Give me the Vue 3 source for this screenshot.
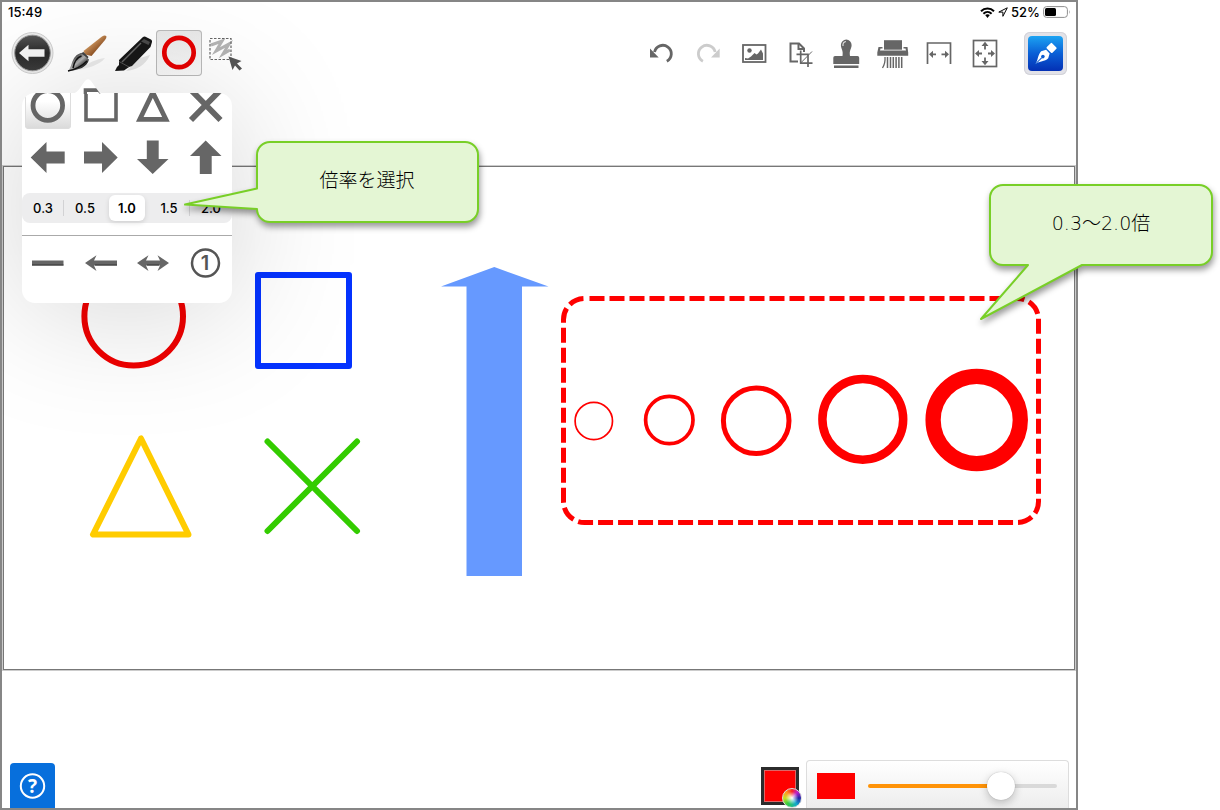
<template>
  <div class="stage">
    <div class="tablet">
      <div class="status">
        <span>15:49</span>
        <div class="status-right">
          <svg width="15" height="11" viewBox="0 0 15 11" fill="none" stroke="#000" stroke-width="2">
            <path d="M1 4.2C4.6 .6 10.400 .6 14 4.200" />
            <path d="M3.400 6.700c2.400-2.200 5.800-2.200 8.200 0" />
            <path d="M5.200 8 7.500 11 9.800 8C8.500 7 6.500 7 5.200 8z" fill="#000" stroke="none" />
          </svg>
          <svg width="10" height="10" viewBox="0 0 10 10" fill="none" stroke="#000" stroke-width="1" stroke-linejoin="round">
            <path d="M9.300 .8.8 5.100h4.100v4.200z" />
          </svg>
          <span>52%</span>
          <svg width="28" height="12" viewBox="0 0 28 12">
            <rect x=".6" y=".6" width="23.800" height="10.800" rx="3" fill="none" stroke="#8e8e8e" />
            <rect x="2" y="2" width="11" height="8" rx="1.500" />
            <path d="M26 4q1.500 2 0 4z" fill="#999" />
          </svg>
        </div>
      </div>

      <header class="toolbar">
        <button class="tool tool-back" aria-label="戻る">
          <svg viewBox="0 0 46 46">
            <defs>
              <linearGradient id="gBack" x2="0" y2="1">
                <stop offset="0" stop-color="#555" />
                <stop offset=".5" stop-color="#2a2a2a" />
                <stop offset="1" stop-color="#3c3c3c" />
              </linearGradient>
            </defs>
            <circle cx="23.500" cy="23" r="20.500" fill="#ececec" stroke="#cfcfcf" />
            <circle cx="23.500" cy="23" r="17.800" fill="url(#gBack)" stroke="#999" />
            <path d="M10 23 19.500 14.800v4.500H35.500v7.400H19.500v4.500z" fill="#f4f4f4" />
          </svg>
        </button>
        <button class="tool" aria-label="筆">
          <svg viewBox="0 0 46 46">
            <defs>
              <linearGradient id="gWood" x2="1" y2="1">
                <stop offset=".3" stop-color="#d9a066" />
                <stop offset=".7" stop-color="#8a4d20" />
              </linearGradient>
              <linearGradient id="gHair" x2="1" y2="1">
                <stop offset=".2" stop-color="#333" />
                <stop offset=".5" stop-color="#b5b5b5" />
                <stop offset=".75" stop-color="#222" />
              </linearGradient>
            </defs>
            <path d="M14 40C24 38 36 35 41 28 32 29 24 33 14 40z" fill="#000" opacity=".08" />
            <path d="M38 6.500Q41 4.500 42.500 6.500 42.500 8 41 10L27.500 26 21 24.500 19.500 21z" fill="url(#gWood)" />
            <path d="M19.500 22 24.500 27 22 31 14.500 24.500z" fill="#444" />
            <path d="M17 23 25 29.500C23 37 15 40.500 4 41 9 36 7 26 17 23z" fill="url(#gHair)" />
            <path d="M9 38Q11 28 17.500 26M4 41Q15 39 23 31" fill="none" stroke="#111" stroke-width="1.500" />
          </svg>
        </button>
        <button class="tool" aria-label="マーカー">
          <svg viewBox="0 0 46 46">
            <path d="M16 41C26 40 36 35 40 25L30 28z" fill="#000" opacity=".1" />
            <path d="M33 7Q34 6.300 35.500 6.700L41 9.500Q42.500 10.500 42 12L40.500 17 22 36 19 37 14 40.500 5 41 7 37 9 35 9 30z" fill="#171717" />
            <path d="M34 9 40 12 38.500 15 31 11.500z" fill="#4a4a4a" />
            <path d="M31 13 12 32" stroke="#666" stroke-width="1.500" />
            <path d="M9 31.500 19 37" stroke="#555" />
          </svg>
        </button>
        <button class="tool tool-active" aria-label="図形">
          <svg viewBox="0 0 46 46">
            <circle cx="23" cy="22.500" r="14.700" fill="none" stroke="#e60000" stroke-width="4.700" />
          </svg>
        </button>
        <button class="tool" aria-label="選択">
          <svg viewBox="0 0 46 46">
            <path d="M9 15 20 11 14 21 27 14 21 24 28 20" fill="none" stroke="#b4b4b4" stroke-width="3" />
            <rect x="8" y="8.500" width="21" height="21" fill="none" stroke="#666" stroke-width="1.200" stroke-dasharray="2.500 1.500" />
            <path d="M26.500 26.500 39.500 31 35 33.500 40 38.500 37.500 40.500 33 35.500 30.500 40z" fill="#555" />
          </svg>
        </button>

        <div class="spacer"></div>

        <button class="tool" aria-label="元に戻す">
          <svg viewBox="0 0 46 46">
            <path d="M16.500 22A8.500 8.500 0 1 1 28.800 31.300" fill="none" stroke="#666" stroke-width="2.800" />
            <path d="M12 18.500v9h8.700z" fill="#666" />
          </svg>
        </button>
        <button class="tool" aria-label="やり直す">
          <svg viewBox="0 0 46 46">
            <path d="M31.200 22A8.500 8.500 0 1 0 18.900 31.300" fill="none" stroke="#ccc" stroke-width="2.800" />
            <path d="M35.700 18.500v9h-8.700z" fill="#ccc" />
          </svg>
        </button>
        <button class="tool" aria-label="画像">
          <svg viewBox="0 0 46 46">
            <rect x="13" y="15" width="22.500" height="17" fill="none" stroke="#666" stroke-width="1.800" />
            <circle cx="19.500" cy="20.500" r="2.200" fill="#666" />
            <path d="M15 30v-2l3 .5 3-2 3.500-3.500 2 1.500 1.500-1 3-4 2 4v6.500z" fill="#666" />
          </svg>
        </button>
        <button class="tool" aria-label="ページ切り抜き">
          <svg viewBox="0 0 46 46" fill="none" stroke="#666" stroke-width="2">
            <path d="M22 31.500h-7.500V13.500h8.500l5 5V22" />
            <path d="M22.500 13.500V19H28" />
            <path d="M24.700 20.500v12.700H36.500M20.500 24.300h11.500V37" stroke-width="1.700" />
            <path d="M24.700 33 36 21.500" stroke-width="1" />
          </svg>
        </button>
        <button class="tool" aria-label="スタンプ">
          <svg viewBox="0 0 46 46" fill="#666">
            <path d="M24.300 9.500a5.500 5.500 0 0 1 5.300 5.500c0 4-2.600 5-1.600 11h7.500q1.700 0 1.700 1.700V34H11.300v-6.300q0-1.700 1.700-1.700h7.500c1-6-1.600-7-1.600-11a5.500 5.500 0 0 1 5.400-5.500z" />
            <rect x="12" y="35.500" width="24.500" height="2.500" />
            <path d="M21 16Q20.500 12 24 11.500" fill="none" stroke="#ddd" stroke-width="1.200" />
          </svg>
        </button>
        <button class="tool" aria-label="シュレッダー">
          <svg viewBox="0 0 46 46" fill="#666">
            <rect x="16" y="10.200" width="18" height="9.500" />
            <path d="M10.500 17h4v1.500h-2L12 20.500h26l-.5-2h-2V17h4l.7 5.500v3.200H9.300v-3.200z" />
            <path d="M19.500 27v11M22.500 27v11M25.300 27v11M28.100 27v11M30.900 27v11M33.700 27v11" stroke="#666" stroke-width="1.500" />
            <path d="M17 27Q17.500 33 14.500 38" fill="none" stroke="#666" stroke-width="1.300" />
          </svg>
        </button>
        <button class="tool" aria-label="幅に合わせる">
          <svg viewBox="0 0 46 46" fill="#666" stroke="#666">
            <path d="M13.500 34V13h23v21" fill="none" stroke-width="1.700" />
            <path d="M17 24.300h5M27.500 24.300h5" stroke-width="1.800" />
            <path d="M15 24.300 19 20.700v7.200zM35 24.300 31 20.700v7.200z" stroke="none" />
          </svg>
        </button>
        <button class="tool" aria-label="全体表示">
          <svg viewBox="0 0 46 46" fill="#666" stroke="#666">
            <rect x="13.500" y="10.500" width="23" height="26" fill="none" stroke-width="1.700" />
            <path d="M17 23.500h5M28 23.500h5M25 15v4.500M25 27.500V32" stroke-width="1.800" />
            <path d="M15 23.500 19 20v7zM35 23.500 31 20v7zM25 11.700 21.500 16h7zM25 35.300 21.500 31h7z" stroke="none" />
          </svg>
        </button>
        <button class="pen" aria-label="ペンモード">
          <svg viewBox="0 0 35 35">
            <g transform="translate(7.500 28) rotate(45)">
              <path d="M0 0C-1-5-5-8-5-13L-2.500-17.500H2.500L5-13C5-8 1-5 0 0z" fill="#fff" />
              <rect x="-4" y="-26.500" width="8" height="7.500" rx="1" fill="#fff" />
              <path d="M0 0V-9" stroke="#0b5bd0" />
              <circle cy="-10.500" r="1.800" fill="#0b5bd0" />
            </g>
          </svg>
        </button>
      </header>

      <main class="sheet">
        <svg class="drawing" viewBox="4 167 1070 502" fill="none" stroke-linejoin="round" stroke-linecap="round">
          <circle cx="133.700" cy="316.300" r="49.300" stroke="#f00000" stroke-width="6" />
          <rect x="258" y="275" width="91" height="91" stroke="#0433ff" stroke-width="6" />
          <path d="M141 438.500 93 534.500H188.500z" stroke="#fc0" stroke-width="6" />
          <path d="M267.500 441.500 357 531M357 441.500 267.500 531" stroke="#3c0" stroke-width="6" />
          <path d="M494.300 267 548.500 286.500H522V576H466.500V286.500H441z" fill="#69f" />
          <circle
            v-for="c in samples"
            :key="c.x"
            :cx="c.x"
            :cy="c.y"
            :r="c.r"
            stroke="red"
            :stroke-width="c.w"
          />
          <rect
            x="563.500" y="298.500" width="475" height="224" rx="21"
            stroke="red" stroke-width="5" stroke-linecap="butt"
            stroke-dasharray="15 5" stroke-dashoffset="-5"
          />
        </svg>
      </main>

      <footer class="footer">
        <button class="help" aria-label="ヘルプ">
          <svg viewBox="0 0 45 45">
            <circle cx="22.500" cy="23" r="11.700" fill="none" stroke="#fff" stroke-width="2" />
            <text x="22.500" y="30" text-anchor="middle" fill="#fff">?</text>
          </svg>
        </button>
        <div class="spacer"></div>
        <button class="color" aria-label="色">
          <span class="wheel"></span>
        </button>
        <div class="width-panel">
          <span class="swatch"></span>
          <input
            v-model="width"
            type="range"
            min="0"
            max="100"
            aria-label="太さ"
            :style="{ '--fill': width + '%' }"
          />
        </div>
      </footer>

      <section class="popover">
        <svg class="popover-arrow" width="32" height="15" viewBox="0 0 32 15">
          <path d="M0 15C7 14 11 3 14 1q2-1.500 4 0C21 3 25 14 32 15z" fill="#fff" />
          <path d="M11.700 15V9.300h12.500l4.300 5.700z" fill="#666" />
          <path d="M15 15v-2h11l2 2z" fill="#fff" />
        </svg>
        <div class="popover-body">
          <div class="shapes">
            <button
              v-for="s in shapes"
              :key="s.name"
              class="shape"
              :class="{ selected: s.name === shape }"
              :aria-label="s.name"
              @click="shape = s.name"
            >
              <svg viewBox="0 0 46 46">
                <path :d="s.d" :fill="s.w ? 'none' : '#666'" :stroke="s.w ? '#666' : 'none'" :stroke-width="s.w" />
              </svg>
            </button>
          </div>
          <div class="scales" role="radiogroup" aria-label="倍率">
            <label v-for="s in scales" :key="s" class="scale" :class="{ on: s === scale }">
              <input v-model="scale" type="radio" name="scale" :value="s" />
              <span>{{ s }}</span>
            </label>
          </div>
          <div class="lines">
            <button v-for="l in lines" :key="l.name" class="shape" :aria-label="l.name">
              <svg viewBox="0 0 46 46">
                <path :d="l.d" fill="#666" />
                <path :d="l.under" stroke="#333" />
              </svg>
            </button>
            <button class="shape" aria-label="番号">
              <svg viewBox="0 0 46 46">
                <circle cx="22.500" cy="23" r="13.500" fill="none" stroke="#555" stroke-width="2.500" />
                <text x="22" y="30" text-anchor="middle" fill="#555">1</text>
              </svg>
            </button>
          </div>
        </div>
      </section>
    </div>

    <div class="callout callout-left">
      <svg viewBox="0 0 224 82">
        <path d="M15 1H210a13 13 0 0 1 13 13V68a13 13 0 0 1-13 13H15A13 13 0 0 1 2 68L-70 63.500 2 47.500V14A13 13 0 0 1 15 1z" />
      </svg>
      <p>倍率を選択</p>
    </div>
    <div class="callout callout-right">
      <svg viewBox="0 0 224 82">
        <path d="M14 1H210a13 13 0 0 1 13 13V68a13 13 0 0 1-13 13H93L-8 135 39 81H14A13 13 0 0 1 1 68V14A13 13 0 0 1 14 1z" />
      </svg>
      <p>0.3〜2.0倍</p>
    </div>
  </div>
</template>

<script setup>
import { ref } from 'vue'

const shape = ref('円')
const scale = ref('1.0')
const width = ref(74)

const scales = ['0.3', '0.5', '1.0', '1.5', '2.0']

const shapes = [
  { name: '円', w: 4.8, d: 'M8 22.500a14.800 14.800 0 1 0 29.600 0a14.800 14.800 0 1 0-29.600 0z' },
  { name: '四角', w: 3.6, d: 'M8 7H38V37H8z' },
  { name: '三角', w: 4.8, d: 'M22.800 9.500 9.800 36.300H35.900z' },
  { name: 'バツ', w: 5.8, d: 'M8 7 37.500 37M37.500 7 8 37' },
  { name: '左矢印', d: 'M5.700 23.500 21.500 8v9.500H39.700v12H21.500V39z' },
  { name: '右矢印', d: 'M39.700 23.500 24 8v9.500H6v12H24V39z' },
  { name: '下矢印', d: 'M22.700 40 38.500 25H28.700V6.500H16.800V25H7z' },
  { name: '上矢印', d: 'M22.700 6.500 38.500 22H28.700V40H16.800V22H7z' }
]

const lines = [
  { name: '直線', d: 'M7 20.500H38.500V25.500H7z', under: 'M7 25H38.500' },
  { name: '矢印', d: 'M7 23 18.500 15.200 16 20.500H39v5H16L18.500 31z', under: 'M17 25H39' },
  { name: '両矢印', d: 'M7 23 18.500 15.200 16 20.500H30L27.500 15.200 39 23 27.500 31 30 25.500H16L18.500 31z', under: 'M17 25H29' }
]

const samples = [
  { x: 593.8, y: 421, r: 18.7, w: 1.7 },
  { x: 669.3, y: 420, r: 23.7, w: 3.7 },
  { x: 756.2, y: 420.7, r: 32.8, w: 5 },
  { x: 862.8, y: 419.3, r: 40.4, w: 8.5 },
  { x: 976.7, y: 420, r: 43.6, w: 15.3 }
]
</script>

<style>
body {
  margin: 0;
  background: #fff;
}
</style>

<style scoped>
.stage {
  position: relative;
  display: flex;
  min-height: 100vh;
  padding-right: 142px;
  box-sizing: border-box;
  overflow: hidden;
  font-family: Inter, "Noto Sans CJK JP", sans-serif;
}

button {
  padding: 0;
  border: 0;
  background: none;
  cursor: pointer;
}

button svg {
  display: block;
  width: 100%;
}

.spacer {
  flex: 1;
}

.tablet {
  position: relative;
  flex: 1;
  display: flex;
  flex-direction: column;
  border: 2px solid #868686;
  overflow: hidden;
}

/* status bar */
.status {
  display: flex;
  justify-content: space-between;
  align-items: center;
  height: 20px;
  padding: 0 5px 0 6px;
  font-size: 13px;
  font-weight: 500;
  color: #000;
}

.status-right {
  display: flex;
  align-items: center;
  gap: 3px;
}

/* toolbar */
.toolbar {
  display: flex;
  align-items: center;
  padding: 8px 9px 0 7px;
}

.tool {
  width: 46px;
  height: 46px;
  box-sizing: border-box;
}

.tool-back {
  margin-right: 9px;
}

.tool-active {
  border-radius: 4px;
  background: linear-gradient(#e8e8e8, #fafafa);
  box-shadow: inset 0 0 0 1px #bbb;
}

.pen {
  width: 43px;
  height: 43px;
  margin-left: 18px;
  padding: 4px;
  border-radius: 6px;
  background: #e2e2e8;
  box-shadow: inset 0 0 0 1px #d2d2d8;
}

.pen svg {
  border-radius: 4px;
  background: linear-gradient(#1ca3f2, #0a5fd6 50%, #0430b4);
}

/* page */
.sheet {
  margin: 90px 1px 0;
  border: 1px solid #777;
  box-shadow: 0 0 0 1px #ccc;
}

.drawing {
  display: block;
  width: 100%;
  height: auto;
}

/* footer */
.footer {
  display: flex;
  align-items: flex-end;
  height: 48px;
  margin-top: auto;
  padding: 0 7px 0 8px;
}

.help {
  width: 45px;
  height: 45px;
  border-radius: 4px 4px 0 0;
  background: #076fdc;
}

.help text {
  font: 700 19px "Open Sans", sans-serif;
}

.color {
  position: relative;
  width: 38px;
  height: 38px;
  margin: 0 7px 3px 0;
  border: 3px solid #2b2b2b;
  background: red;
  box-shadow: inset 0 0 0 1px #d66;
}

.wheel {
  position: absolute;
  right: -6px;
  bottom: -6px;
  width: 18px;
  height: 18px;
  border: 1px solid #ddd;
  border-radius: 50%;
  background:
    radial-gradient(#fff, transparent 50%),
    conic-gradient(#f22, #b2c 12%, #22a 25%, #1ac 40%, #3c4 60%, #cd2 75%, #f92 88%, #f22);
}

.width-panel {
  display: flex;
  align-items: center;
  gap: 13px;
  height: 48px;
  padding: 3px 11px 0 10px;
  box-sizing: border-box;
  border: 1px solid #ddd;
  border-bottom: 0;
  border-radius: 4px 4px 0 0;
  background: linear-gradient(#fff, #ededed);
}

.swatch {
  width: 38px;
  height: 26px;
  background: red;
}

.width-panel input {
  appearance: none;
  width: 189px;
  height: 28px;
  margin: 0;
  background: none;
}

.width-panel input::-webkit-slider-runnable-track {
  height: 4px;
  border-radius: 2px;
  background: linear-gradient(90deg, #ff9307 var(--fill), #d9d9d9 var(--fill));
}

.width-panel input::-webkit-slider-thumb {
  appearance: none;
  width: 28px;
  height: 28px;
  margin-top: -12px;
  border-radius: 50%;
  background: #fff;
  box-shadow: 0 3px 8px rgba(0, 0, 0, 0.22), 0 0 1px rgba(0, 0, 0, 0.3);
}

/* shape popover */
.popover {
  position: absolute;
  top: 91px;
  left: 20px;
  width: 210px;
  border-radius: 13px;
  background: #fff;
  box-shadow: 0 8px 130px rgba(0, 0, 0, 0.17);
}

.popover-arrow {
  position: absolute;
  top: -14px;
  left: 50px;
}

.popover-body {
  padding-bottom: 14px;
  border-radius: 13px;
  overflow: hidden;
}

.shapes,
.lines {
  display: grid;
  grid-template-columns: repeat(4, 1fr);
  grid-auto-rows: 52px;
  place-items: center;
}

.shapes {
  margin-top: -13px;
  grid-auto-rows: 51px;
}

.shape {
  width: 46px;
  height: 46px;
}

.shape text {
  font: 600 20px Inter, sans-serif;
}

.shape.selected {
  border-radius: 4px;
  background: linear-gradient(#fff 40%, #d9d9d9);
  box-shadow: inset 0 0 0 1px #ddd;
}

.scales {
  display: grid;
  grid-template-columns: repeat(5, 1fr);
  height: 30px;
  margin-top: 11px;
  border-radius: 8px;
  background: #ededee;
}

.scale {
  position: relative;
  display: flex;
  align-items: center;
  justify-content: center;
  font-size: 13px;
  font-weight: 500;
}

.scale:nth-child(1),
.scale:nth-child(4) {
  background: linear-gradient(#d2d2d4, #d2d2d4) right center / 1px 16px no-repeat;
}

.scale input {
  position: absolute;
  inset: 0;
  margin: 0;
  opacity: 0;
}

.scale span {
  padding: 0 9px;
  line-height: 26px;
  border-radius: 6px;
}

.scale.on span {
  background: #fff;
  font-weight: 600;
  box-shadow: 0 2px 5px rgba(0, 0, 0, 0.12);
}

.lines {
  margin-top: 12px;
  padding-top: 1px;
  border-top: 1px solid #aaa;
}

/* callouts */
.callout {
  position: absolute;
  display: flex;
  align-items: center;
  justify-content: center;
  width: 224px;
  height: 82px;
}

.callout svg {
  position: absolute;
  inset: 0;
  width: 100%;
  height: 100%;
  overflow: visible;
  fill: #e4f6d4;
  stroke: #78cf27;
  stroke-width: 2;
  stroke-linejoin: round;
  filter: drop-shadow(1px 4px 3px rgba(0, 0, 0, 0.4));
}

.callout p {
  position: relative;
  margin: 0 0 4px;
  font-family: "DejaVu Sans", "Noto Sans CJK JP", sans-serif;
  font-size: 19px;
  font-weight: 300;
  line-height: 28px;
  color: #000;
}

.callout-left {
  top: 141px;
  left: 255px;
}

.callout-right {
  top: 184px;
  right: 7px;
}
</style>
